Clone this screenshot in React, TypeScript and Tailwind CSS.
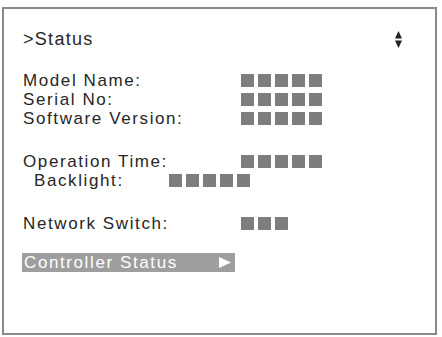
const font = { fontFamily: '"Liberation Sans", Arial, sans-serif' };

function Blocks({ count }: { count: number }) {
  return (
    <div className="flex gap-[4px]">
      {Array.from({ length: count }).map((_, i) => (
        <div key={i} className="w-[13px] h-[13px] bg-[#7d7d7d]" />
      ))}
    </div>
  );
}

function Row({ label, count, indent }: { label: string; count: number; indent?: boolean }) {
  return (
    <div className={`flex items-center h-[19px] ${indent ? "pl-[11px]" : ""}`}>
      <span className={indent ? "w-[135px]" : "w-[218px]"}>{label}</span>
      <Blocks count={count} />
    </div>
  );
}

function UpDown() {
  return (
    <svg width="7" height="17" viewBox="0 0 7 17" className="text-[#222]">
      <path d="M3.5 0 L7 7.5 L0 7.5 Z" fill="currentColor" />
      <path d="M0 9.5 L7 9.5 L3.5 17 Z" fill="currentColor" />
    </svg>
  );
}

export default function App() {
  return (
    <div className="w-[442px] h-[337px] bg-white pt-[7px] pl-[2px]" style={font}>
      <div className="w-[435px] h-[328px] border-2 border-[#8a8a8a] pl-[19px] pr-[33px] text-[#262626] text-[17px] tracking-[1.6px]">
        <div className="flex items-center justify-between h-[22px] mt-[19px]">
          <span className="text-[18px] tracking-[1.3px]">&gt;Status</span>
          <UpDown />
        </div>

        <div className="mt-[21px]">
          <Row label="Model Name:" count={5} />
          <Row label="Serial No:" count={5} />
          <Row label="Software Version:" count={5} />
        </div>

        <div className="mt-[24px]">
          <Row label="Operation Time:" count={5} />
          <Row label="Backlight:" count={5} indent />
        </div>

        <div className="mt-[24px]">
          <Row label="Network Switch:" count={3} />
        </div>

        <div className="mt-[20px] -ml-[1px] flex items-center justify-between w-[213px] h-[19px] bg-[#9e9e9e] text-white pl-[2px] pr-[4px]">
          <span>Controller Status</span>
          <svg width="12" height="11" viewBox="0 0 12 11">
            <path d="M0 0 L12 5.5 L0 11 Z" fill="white" />
          </svg>
        </div>
      </div>
    </div>
  );
}
